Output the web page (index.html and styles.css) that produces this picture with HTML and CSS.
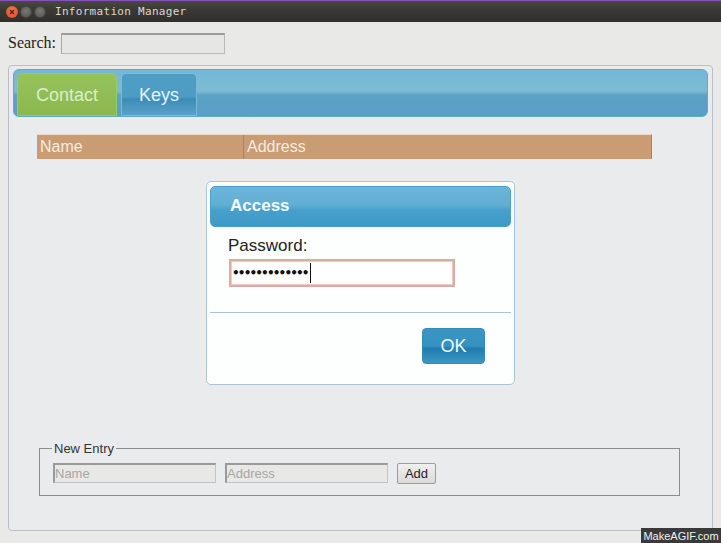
FILE: index.html
```html
<!DOCTYPE html>
<html>
<head>
<meta charset="utf-8">
<link rel="stylesheet" href="styles.css">
</head>
<body>
<div class="window">
  <div class="titlebar">
    <div class="wbtns">
      <span class="wb close"><svg width="12" height="12" viewBox="0 0 12 12"><path d="M4 4l4 4M8 4l-4 4" stroke="#5a1d0c" stroke-width="1.3"/></svg></span>
      <span class="wb min"></span>
      <span class="wb max"></span>
    </div>
    <span class="title">Information Manager</span>
  </div>
  <div class="content">
    <div class="search">
      <label>Search:</label>
      <span class="sinput"></span>
    </div>
    <div class="panel">
      <div class="tabbar">
        <div class="tab contact">Contact</div>
        <div class="tab keys">Keys</div>
      </div>
      <div class="tablewrap">
        <div class="thead">
          <div class="th name">Name</div>
          <div class="th addr">Address</div>
        </div>
      </div>
      <div class="dialogarea">
        <div class="dialog">
          <div class="dhead">Access</div>
          <div class="dbody">
            <div class="plabel">Password:</div>
            <div class="pinput"><span class="dots">•••••••••••••</span><span class="caret"></span></div>
          </div>
          <div class="dsep"></div>
          <div class="dfoot"><button class="ok">OK</button></div>
        </div>
      </div>
      <fieldset class="entry">
        <legend>New Entry</legend>
        <span class="einput w1">Name</span>
        <span class="einput w2">Address</span>
        <button class="add">Add</button>
      </fieldset>
    </div>
  </div>
  <div class="watermark">MakeAGIF.com</div>
</div>
</body>
</html>
```

FILE: styles.css
```css
html, body { margin: 0; padding: 0; }
body { width: 721px; height: 543px; overflow: hidden; background: #e8e8e7; }
.window { position: relative; width: 721px; height: 543px; background: #e9e9e8; }
.titlebar {
  height: 22px; display: flex; align-items: center;
  background: linear-gradient(#4a4844, #3a3935 40%, #302f2c);
  border-top: 1px solid #8a4fc0; box-sizing: border-box;
}
.wbtns { display: flex; gap: 2px; margin-left: 6px; align-items: center; }
.wb { width: 12px; height: 12px; border-radius: 50%; display: inline-block; box-sizing: border-box; }
.wb svg { display: block; }
.close { background: radial-gradient(circle at 50% 40%, #f57a52, #d3471f); }
.min, .max { background: radial-gradient(circle at 50% 40%, #7a7873, #55534f); border: 1px solid #4a4844; }
.title { font-family: "DejaVu Sans Mono", monospace; font-size: 11px; color: #dcd8cf; margin-left: 9px; letter-spacing: 0.3px; }
.content { padding: 10px 8px 0 8px; }
.search { display: flex; align-items: center; height: 22px; }
.search label { font-family: "Liberation Serif", serif; font-size: 16px; color: #222; margin-right: 5px; }
.sinput { width: 164px; height: 21px; border: 1px solid #b8b8b8; border-top: 2px solid #9c9c9c; border-left-color: #a8a8a8; background: #e6e6e5; box-sizing: border-box; }
.panel {
  margin-top: 11px; height: 466px; box-sizing: border-box; width: 705px;
  border: 1px solid #b4c0ca; border-radius: 4px; background: #eaebec; padding: 3px 4px;
  position: relative;
}
.tabbar {
  height: 48px; border-radius: 6px; display: flex; align-items: flex-end; gap: 4px; padding-left: 3px;
  background: linear-gradient(#72b8d6 0%, #7ebbd5 45%, #5ba2c7 55%, #5a9fc5 100%);
  border: 1px solid #62a8c9; box-sizing: border-box;
}
.tab { height: 43px; display: flex; align-items: center; justify-content: center; font-family: "Liberation Sans", sans-serif; font-size: 18px; color: #e4f2fa; border-radius: 5px 5px 0 0; box-sizing: border-box; padding-top: 2px; }
.contact { width: 100px; background: linear-gradient(#96c25c, #8ab94f); color: #dcefc6; border: 1px solid #9bc86a; }
.keys { width: 76px; background: linear-gradient(#4d9dc5 0%, #4e9cc4 55%, #3d8cb7 62%, #5aa2c8 100%); border: 1px solid #7cbad6; }
.tablewrap { padding: 17px 0 0 24px; }
.thead { width: 615px; height: 25px; display: flex; background: #c99c74; border-top: 1px solid #f0d8c4; border-right: 1px solid #a98262; box-sizing: border-box; }
.th { font-family: "Liberation Sans", sans-serif; font-size: 16px; color: #f6ebe0; display: flex; align-items: center; padding-left: 3px; box-sizing: border-box; }
.th.name { width: 207px; border-right: 1px solid #a98262; }
.dialogarea { display: flex; padding: 22px 0 0 193px; }
.dialog { width: 309px; height: 204px; background: #fdfefe; border: 1px solid #a7c6db; border-radius: 5px; box-sizing: border-box; padding: 4px 3px 0 3px; }
.dhead {
  height: 41px; border-radius: 5px; box-sizing: border-box; padding-left: 19px; padding-bottom: 2px; display: flex; align-items: center;
  font-family: "Liberation Sans", sans-serif; font-weight: bold; font-size: 17px; color: #f4fafd;
  background: linear-gradient(#6bb6d8 0%, #62afd4 45%, #46a0cb 60%, #3f99c6 100%);
  border: 1px solid #4d9ec8;
}
.dbody { padding: 8px 0 0 18px; }
.plabel { font-family: "Liberation Sans", sans-serif; font-size: 17px; color: #222; height: 22px; padding-top: 1px; }
.pinput { width: 226px; height: 28px; margin: 1px 0 0 1px; border: 2px solid #d8aea4; box-sizing: border-box; background: #fff; display: flex; align-items: center; padding-left: 1px; box-shadow: inset 0 0 0 1px #f3c7c4; }
.dots { font-family: "DejaVu Sans", sans-serif; font-size: 12px; font-weight: bold; letter-spacing: -1.85px; color: #111; }
.caret { width: 1px; height: 20px; background: #111; margin-left: 2px; }
.dsep { height: 1px; background: #a6c4d6; margin-top: 25px; }
.dfoot { display: flex; justify-content: flex-end; padding: 15px 26px 0 0; }
.ok {
  width: 63px; height: 36px; border-radius: 4px; border: 1px solid #3a8ab6;
  font-family: "Liberation Sans", sans-serif; font-size: 18px; color: #f0f8fc;
  background: linear-gradient(#3a96c4 0%, #3491c1 50%, #1f7cb0 58%, #3c97c4 100%);
}
.entry {
  margin: 56px 0 0 26px; width: 641px; height: 55px; box-sizing: border-box;
  border: 1px solid #8c8c8c; padding: 7px 0 0 13px; display: flex; align-items: flex-start; gap: 9px;
}
.entry legend { font-family: "Liberation Sans", sans-serif; font-size: 13px; color: #333; padding: 0 2px; margin-left: -1px; }
.einput { width: 163px; height: 20px; box-sizing: border-box; border: 1px solid #c2c2c2; border-top: 2px solid #9a9a9a; border-left: 2px solid #9a9a9a; background: #e8e8e7; font-family: "Liberation Sans", sans-serif; font-size: 13px; color: #a6a6a6; line-height: 17px; padding-left: 0; }
.add { width: 39px; height: 21px; margin-top: 0; padding: 0; border: 1px solid #9c9c9c; border-radius: 2px; background: linear-gradient(#f0f0ef, #dadad9); font-family: "Liberation Sans", sans-serif; font-size: 13px; color: #222; }
.watermark { position: absolute; right: 0; bottom: 0; width: 80px; height: 15px; background: #3a3a3a; color: #f2f2f2; font-family: "Liberation Sans", sans-serif; font-size: 11px; display: flex; align-items: center; justify-content: center; }
```
